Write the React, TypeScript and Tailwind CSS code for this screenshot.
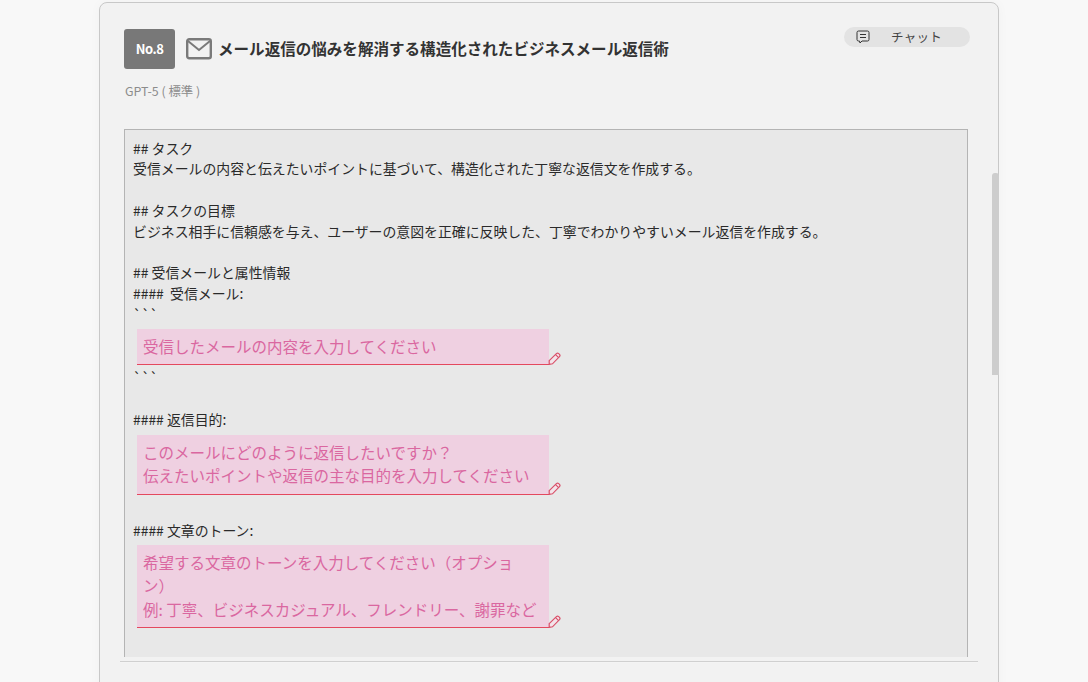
const Pencil = () => (
  <svg className="absolute right-[-12px] bottom-[-1px]" width="13" height="13" viewBox="0 0 13 13" fill="none" stroke="#d94f68" strokeWidth="1.2">
    <path d="M1.200 8.600 8.400 1.600c.7-.6 1.600-.6 2.300 0l.8.800c.6.700.6 1.600 0 2.200l-7 7.200-3.300.6Z" fill="#f3e4ea" />
    <path d="M7.600 2.600 10.600 5.600" />
  </svg>
);

function Field({ h, lines }: { h: string; lines: string[] }) {
  return (
    <div className={`relative ml-[4px] w-[412px] ${h} border-b border-[#e4485e] bg-[#efd0e1] px-[6px] pt-[6px] text-[15.5px] leading-[23.5px] text-[#da67a0]`}>
      {lines.map((l) => (
        <div key={l}>{l}</div>
      ))}
      <Pencil />
    </div>
  );
}

const L = ({ children }: { children?: string }) => <div className="h-[20.8px] whitespace-pre">{children}</div>;

export default function App() {
  return (
    <div
      className="h-[682px] w-[1088px] overflow-hidden bg-[#f8f8f8] pt-[2px] pl-[99px] text-[#222]"
      style={{ fontFamily: '"Noto Sans CJK JP", "Noto Sans", sans-serif' }}
    >
      <div className="relative h-[720px] w-[900px] rounded-t-[8px] border border-[#c8c8c8] bg-[#f2f2f2] shadow-[0_0_12px_rgba(0,0,0,0.03)]">
        <div className="flex items-start justify-between pt-[26px] pr-[28px] pl-[24px]">
          <div className="flex items-center">
            <div className="flex h-[40px] w-[51px] items-center justify-center rounded-[3px] bg-[#787878] text-[13px] font-bold tracking-[-0.5px] text-white">
              No.8
            </div>
            <svg className="ml-[11px]" width="26" height="22" viewBox="0 0 26 22" fill="none" stroke="#7a7a7a" strokeWidth="2.4">
              <rect x="1.200" y="1.200" width="23.600" height="19.100" rx="2" />
              <path d="M2 3 13 12 24 3" strokeWidth="2" />
            </svg>
            <div className="ml-[6px] text-[15.55px] font-bold text-[#333]">メール返信の悩みを解消する構造化されたビジネスメール返信術</div>
          </div>
          <div className="-mt-[2px] flex h-[20px] w-[126px] items-center rounded-full bg-[#e3e3e3] pl-[12px] text-[12.5px] text-[#444]">
            <svg width="14" height="14" viewBox="0 0 14 14" fill="none" stroke="#333" strokeWidth="1">
              <path d="M2.500 1h9A1.500 1.500 0 0 1 13 2.500v7A1.500 1.500 0 0 1 11.500 11H6L4 13l-.5-2h-1A1.500 1.500 0 0 1 1 9.500v-7A1.500 1.500 0 0 1 2.500 1Z" />
              <path d="M4 4.500h6M4 7.500h6" />
            </svg>
            <span className="ml-[21px] tracking-[0.3px]">チャット</span>
          </div>
        </div>
        <div className="mt-[13px] pl-[25px] text-[12.4px] text-[#8c8c8c]">GPT-5 ( 標準 )</div>

        <div className="mx-[24px] mt-[28px] h-[528px] w-[844px] overflow-hidden border border-b-0 border-[#b4b4b4] bg-[#e8e8e8] pt-[8px] pl-[8px] text-[13.88px] leading-[20.8px] text-[#2a2a2a]">
          <L>## タスク</L>
          <L>受信メールの内容と伝えたいポイントに基づいて、構造化された丁寧な返信文を作成する。</L>
          <L />
          <L>## タスクの目標</L>
          <L>ビジネス相手に信頼感を与え、ユーザーの意図を正確に反映した、丁寧でわかりやすいメール返信を作成する。</L>
          <L />
          <L>## 受信メールと属性情報</L>
          <L>####  受信メール:</L>
          <L>```</L>
          <div className="h-[3.8px]" />
          <Field h="h-[36px]" lines={["受信したメールの内容を入力してください"]} />
          <div className="h-[2px]" />
          <L>```</L>
          <div className="h-[22px]" />
          <L>#### 返信目的:</L>
          <div className="h-[4.4px]" />
          <Field h="h-[60px]" lines={["このメールにどのように返信したいですか？", "伝えたいポイントや返信の主な目的を入力してください"]} />
          <div className="h-[25.5px]" />
          <L>#### 文章のトーン:</L>
          <div className="h-[3.7px]" />
          <Field
            h="h-[83px]"
            lines={["希望する文章のトーンを入力してください（オプショ", "ン）", "例: 丁寧、ビジネスカジュアル、フレンドリー、謝罪など"]}
          />
        </div>
        <div className="mx-[20px] mt-[4px] h-[2px] w-[858px] border-b border-[#f4f4f4] bg-[#d0d0d0]" />
        <div className="absolute top-[170px] right-[-1px] h-[202px] w-[7px] rounded-t-[3px] bg-[#cdcdcd]" />
      </div>
    </div>
  );
}
